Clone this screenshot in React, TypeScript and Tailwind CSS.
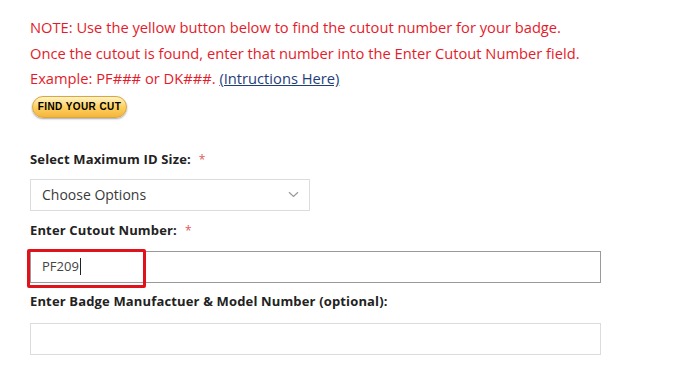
const font = { fontFamily: '"Open Sans", "Liberation Sans", sans-serif' };

const Label = ({ text, required }: { text: string; required?: boolean }) => (
  <div className="text-[13px] font-bold text-[#222] leading-[20px] tracking-[0.15px]">
    {text}
    {required && <span className="ml-[8px] text-[#e05a5a] font-normal text-[12px]">*</span>}
  </div>
);

export default function App() {
  return (
    <div className="w-[676px] h-[367px] bg-white overflow-hidden pl-[30px]" style={font}>
      <div className="pt-[15px] text-[#e31c2b] text-[14.7px] leading-[25.5px]">
        <p>NOTE: Use the yellow button below to find the cutout number for your badge.</p>
        <p>Once the cutout is found, enter that number into the Enter Cutout Number field.</p>
        <p>
          Example: PF### or DK###.{" "}
          <a href="#" className="text-[#1f3e7a] underline">
            (Intructions Here)
          </a>
        </p>
      </div>

      <button
        className="ml-[2px] mt-[4px] flex h-[22px] w-[95px] items-center justify-center whitespace-nowrap rounded-full border border-[#d9a640] bg-gradient-to-b from-[#fff3c4] via-[#fdd15e] to-[#f5b53c] text-[10px] font-bold tracking-[0.4px] text-black shadow-[0_1px_2px_rgba(0,0,0,0.35)]"
        style={{ fontFamily: '"Liberation Sans", Arial, sans-serif' }}
      >
        FIND YOUR CUT
      </button>

      <div className="mt-[31px]">
        <Label text="Select Maximum ID Size:" required />
      </div>
      <div className="mt-[9px] flex h-[32px] w-[280px] items-center justify-between border border-[#dcdcdc] pl-[11px] pr-[10px] text-[14px] text-[#3a3a3a]">
        <span>Choose Options</span>
        <svg width="11" height="7" viewBox="0 0 11 7" fill="none" stroke="#999" strokeWidth="1.2">
          <path d="M1 1.2 L5.5 5.5 L10 1.2" />
        </svg>
      </div>

      <div className="mt-[9px]">
        <Label text="Enter Cutout Number:" required />
      </div>
      <div className="relative mt-[10px] h-[32px] w-[571px] border border-[#9a9a9a]">
        <div className="flex h-full items-center pl-[11px] text-[13px] text-[#444]">
          PF209<span className="ml-[1px] inline-block h-[17px] w-[1px] bg-[#222]" />
        </div>
        <div className="absolute left-[-4px] top-[-3px] h-[39px] w-[119px] rounded-[2px] border-[3px] border-[#e0121b]" />
      </div>

      <div className="mt-[8px]">
        <Label text="Enter Badge Manufactuer & Model Number (optional):" />
      </div>
      <div className="mt-[12px] h-[32px] w-[571px] border border-[#dcdcdc]" />
    </div>
  );
}
